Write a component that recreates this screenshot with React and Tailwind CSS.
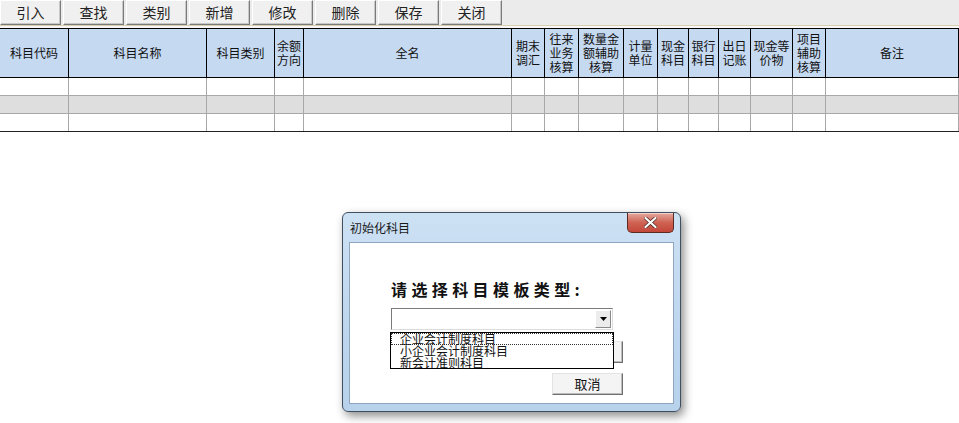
import React from "react";

const FONT = { fontFamily: '"Noto Sans CJK SC", "Noto Sans", sans-serif' };

const toolbar = ["引入", "查找", "类别", "新增", "修改", "删除", "保存", "关闭"];

const cols = [
  { w: 69, t: ["科目代码"] },
  { w: 138, t: ["科目名称"] },
  { w: 68, t: ["科目类别"] },
  { w: 29, t: ["余额", "方向"] },
  { w: 208, t: ["全名"] },
  { w: 33, t: ["期末", "调汇"] },
  { w: 34, t: ["往来", "业务", "核算"] },
  { w: 45, t: ["数量金", "额辅助", "核算"] },
  { w: 34, t: ["计量", "单位"] },
  { w: 31, t: ["现金", "科目"] },
  { w: 30, t: ["银行", "科目"] },
  { w: 32, t: ["出日", "记账"] },
  { w: 42, t: ["现金等", "价物"] },
  { w: 33, t: ["项目", "辅助", "核算"] },
  { w: 133, t: ["备注"] },
];

function ToolButton({ label }) {
  return (
    <div className="w-[61px] h-[25px] flex items-center justify-center bg-[#f0f0f0] border-t border-l border-t-[#ffffff] border-l-[#ffffff] border-r border-b border-r-[#7a7a7a] border-b-[#7a7a7a] text-[14px] text-[#222] shadow-[inset_-1px_-1px_0_#c8c8c8]">
      {label}
    </div>
  );
}

function WinButton({ label, className = "" }) {
  return (
    <div
      className={
        "w-[71px] h-[22px] flex items-center justify-center bg-[#f4f4f4] border border-t-[#e3e3e3] border-l-[#e3e3e3] border-r-[#6f6f6f] border-b-[#6f6f6f] text-[13px] text-[#111] shadow-[inset_-1px_-1px_0_#bdbdbd] " +
        className
      }
    >
      {label}
    </div>
  );
}

export default function App() {
  return (
    <div className="relative w-[959px] h-[423px] bg-white overflow-hidden" style={FONT}>
      {/* Toolbar */}
      <div className="h-[26px] bg-[#ebebeb] border-b border-b-[#d8cfae] flex gap-[2px] items-start">
        {toolbar.map((l) => (
          <ToolButton key={l} label={l} />
        ))}
      </div>
      <div className="h-[2px] bg-[#f7f7f7]" />

      {/* Table header */}
      <div className="flex bg-[#c5d9f1] border-t border-b border-black h-[50px]">
        {cols.map((c, i) => (
          <div
            key={i}
            className="shrink-0 border-r border-black flex flex-col items-center justify-center text-[12px] leading-[14px] text-[#111] text-center"
            style={{ width: c.w }}
          >
            {c.t.map((line, j) => (
              <span key={j}>{line}</span>
            ))}
          </div>
        ))}
      </div>

      {/* Body rows */}
      {[0, 1, 2].map((r) => (
        <div
          key={r}
          className={
            "flex h-[18px] border-b " +
            (r === 2 ? "border-b-[#222]" : "border-b-[#a8a8a8]") +
            (r === 1 ? " bg-[#dedede]" : " bg-white")
          }
        >
          {cols.map((c, i) => (
            <div
              key={i}
              className="shrink-0 border-r border-r-[#a8a8a8]"
              style={{ width: c.w }}
            />
          ))}
        </div>
      ))}

      {/* Dialog */}
      <div className="absolute left-[342px] top-[212px] w-[339px] h-[200px] rounded-[6px] border border-[#3f4f60] bg-gradient-to-b from-[#cde1f4] via-[#bfd7ef] to-[#b8d2ec] shadow-[3px_4px_10px_rgba(0,0,0,0.45)]">
        {/* Title */}
        <div className="h-[29px] flex items-center pl-[7px] text-[12px] text-[#1a1a1a]">
          初始化科目
        </div>
        {/* Close button */}
        <div className="absolute left-[284px] top-[0px] w-[47px] h-[20px] rounded-b-[5px] border border-[#5b2b22] border-t-0 bg-gradient-to-b from-[#e3a99f] via-[#cf6253] to-[#c2473a] flex items-center justify-center shadow-[inset_0_1px_0_rgba(255,255,255,0.5)]">
          <svg width="13" height="11" viewBox="0 0 13 11">
            <path
              d="M1.5 1 L11.5 10 M11.5 1 L1.5 10"
              stroke="#4a2a25"
              strokeWidth="3.6"
              strokeLinecap="round"
            />
            <path
              d="M1.5 1 L11.5 10 M11.5 1 L1.5 10"
              stroke="#ffffff"
              strokeWidth="2.2"
              strokeLinecap="round"
            />
          </svg>
        </div>

        {/* Client area */}
        <div className="relative mx-[6px] h-[162px] bg-white border border-[#8fa5bd] pl-[41px]">
          <div className="mt-[36px] h-[20px] leading-[20px] text-[16px] font-bold tracking-[4.4px] text-[#111] whitespace-nowrap">
            请选择科目模板类型:
          </div>
          {/* Combobox */}
          <div className="mt-[9px] w-[222px] h-[22px] bg-white border border-t-[#7a7a7a] border-l-[#7a7a7a] border-r-[#dcdcdc] border-b-[#dcdcdc] flex justify-end items-center pr-[1px]">
            <div className="w-[16px] h-[18px] bg-[#ececec] border border-t-[#ffffff] border-l-[#ffffff] border-r-[#8a8a8a] border-b-[#8a8a8a] flex items-center justify-center">
              <svg width="7" height="4" viewBox="0 0 7 4">
                <path d="M0 0 H7 L3.5 4 Z" fill="#000" />
              </svg>
            </div>
          </div>
          {/* Buttons */}
          <div className="ml-[161px] mt-[11px] flex flex-col gap-[10px]">
            <WinButton label="" />
            <WinButton label="取消" />
          </div>

          {/* Drop-down list (overlay) */}
          <div className="absolute left-[40px] top-[89px] w-[224px] h-[37px] bg-white border border-black text-[12px] leading-[12px] text-[#111]">
            <div className="h-[12px] pl-[8px] border border-dotted border-[#333] leading-[10px] overflow-visible whitespace-nowrap">
              企业会计制度科目
            </div>
            <div className="h-[12px] pl-[9px] whitespace-nowrap">小企业会计制度科目</div>
            <div className="h-[11px] pl-[9px] leading-[11px] whitespace-nowrap">新会计准则科目</div>
          </div>
        </div>
      </div>
    </div>
  );
}
